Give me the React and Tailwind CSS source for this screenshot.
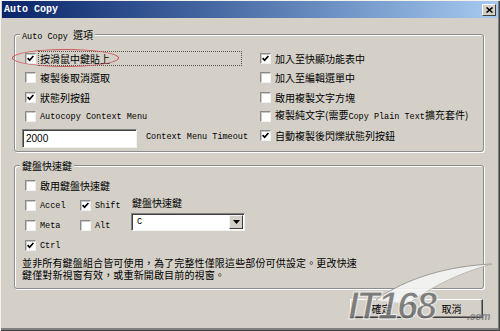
import React from "react";

const CJK = "font-['Noto_Sans_CJK_TC','Noto_Sans_CJK_SC',sans-serif]";

function M({ children }) {
  return <span className="font-['Liberation_Mono',monospace] text-[8.5px]">{children}</span>;
}

function Box({ checked }) {
  return (
    <span className="w-[11px] h-[11px] shrink-0 bg-white border border-t-[#8a8a8a] border-l-[#8a8a8a] border-b-[#f0f0f0] border-r-[#f0f0f0] shadow-[inset_1px_1px_0_#c8c8c8] flex items-center justify-center">
      {checked && (
        <svg width="7" height="7" viewBox="0 0 7 7">
          <path d="M0.6 3.2 L2.6 5.3 L6.4 1" stroke="#000" strokeWidth="1.7" fill="none" />
        </svg>
      )}
    </span>
  );
}

function Row({ checked, children, h = "h-[19.25px]", pl = "pl-[3px]" }) {
  return (
    <div className={`flex items-center gap-[4px] ${h} ${pl}`}>
      <Box checked={checked} />
      <span className="leading-[11px] whitespace-nowrap">{children}</span>
    </div>
  );
}

function Legend({ children }) {
  return (
    <span className="block w-fit -mt-[6px] -ml-[2px] px-[2px] bg-[#d4d0c8] leading-[11px] whitespace-nowrap">
      {children}
    </span>
  );
}

function Btn({ children }) {
  return (
    <div className="w-[63px] h-[19px] bg-[#d4d0c8] border border-t-white border-l-white border-b-[#404040] border-r-[#404040] shadow-[inset_-1px_-1px_0_#808080] flex items-center justify-center leading-[11px]">
      {children}
    </div>
  );
}

export default function App() {
  return (
    <div
      className={`relative w-[500px] h-[331px] bg-[#d4d0c8] overflow-hidden flex flex-col pt-[1px] px-[2px] shadow-[inset_1px_1px_0_#f4f3ee,inset_-1px_-1px_0_#404040,inset_-2px_-3px_0_#808080] ${CJK} text-[10px] text-black`}
    >
      {/* Title bar */}
      <div className="h-[17px] shrink-0 bg-linear-to-r from-[#0a246a] to-[#a6caf0] flex items-center justify-between pl-[2px] pr-[2px]">
        <span className="font-['Liberation_Mono',monospace] font-bold text-[10px] text-white leading-[12px]">
          Auto Copy
        </span>
        <div className="w-[14px] h-[12px] bg-[#d4d0c8] border border-t-white border-l-white border-b-[#404040] border-r-[#404040] flex items-center justify-center">
          <svg width="7" height="6" viewBox="0 0 7 6">
            <path d="M0.5 0.5 L6.5 5.5 M6.5 0.5 L0.5 5.5" stroke="#000" strokeWidth="1.6" />
          </svg>
        </div>
      </div>

      <div className="flex flex-col pl-[12px] pr-[14px] pt-[16px]">
        {/* Group 1 */}
        <div className="h-[118px] border border-[#8c8c8c] rounded-[3px] shadow-[inset_1px_1px_0_#fff,1px_1px_0_#fff] pl-[7px] pr-[6px]">
          <Legend>
            <M>Auto Copy </M>選項
          </Legend>
          <div className="mt-[6px] grid grid-cols-[237px_1fr]">
            <div className="flex flex-col">
              <div className="relative flex items-center gap-[4px] h-[19.25px] pl-[3px]">
                <span className="absolute left-[-10px] top-[0px] w-[107px] h-[18px] rounded-[50%] border border-[#d05050]" />
                <Box checked />
                <span className="-ml-[2px] pl-[1px] h-[15px] w-[204px] border border-dotted border-[#555] flex items-center leading-[11px] whitespace-nowrap">
                  按滑鼠中鍵貼上
                </span>
              </div>
              <Row>複製後取消選取</Row>
              <Row checked>狀態列按鈕</Row>
              <Row>
                <M>Autocopy Context Menu</M>
              </Row>
              <div className="mt-[3px] flex items-start">
                <div className="w-[115px] h-[19px] bg-white border border-t-[#808080] border-l-[#808080] border-b-[#f4f4f4] border-r-[#f4f4f4] shadow-[inset_1px_1px_0_#404040] flex items-center pl-[3px] font-['Liberation_Sans',sans-serif] text-[10px]">
                  2000
                </div>
                <span className="ml-[9px] mt-[0px] leading-[11px] whitespace-nowrap">
                  <M>Context Menu Timeout</M>
                </span>
              </div>
            </div>
            <div className="flex flex-col">
              <Row checked pl="pl-[1px]">加入至快顯功能表中</Row>
              <Row pl="pl-[1px]">加入至編輯選單中</Row>
              <Row pl="pl-[1px]">啟用複製文字方塊</Row>
              <Row pl="pl-[1px]">
                複製純文字(需要<M>Copy Plain Text</M>擴充套件)
              </Row>
              <Row checked pl="pl-[1px]">自動複製後閃爍狀態列按鈕</Row>
            </div>
          </div>
        </div>

        {/* Group 2 */}
        <div className="mt-[13px] h-[124px] border border-[#8c8c8c] rounded-[3px] shadow-[inset_1px_1px_0_#fff,1px_1px_0_#fff] pl-[7px] pr-[6px]">
          <Legend>鍵盤快速鍵</Legend>
          <div className="mt-[4px] flex flex-col">
            <Row h="h-[20px]">啟用鍵盤快速鍵</Row>
            <div className="flex">
              <div className="w-[109px] grid grid-cols-[58px_1fr]">
                <Row h="h-[20px]">
                  <M>Accel</M>
                </Row>
                <Row checked h="h-[20px]" pl="pl-0">
                  <M>Shift</M>
                </Row>
                <Row h="h-[20px]">
                  <M>Meta</M>
                </Row>
                <Row h="h-[20px]" pl="pl-0">
                  <M>Alt</M>
                </Row>
              </div>
              <div className="flex flex-col pt-[2px]">
                <span className="ml-[1px] leading-[11px]">鍵盤快速鍵</span>
                <div className="mt-[5px] w-[114px] h-[18px] bg-white border border-t-[#808080] border-l-[#808080] border-b-[#f4f4f4] border-r-[#f4f4f4] shadow-[inset_1px_1px_0_#404040] flex items-center justify-between pl-[5px] pr-[1px]">
                  <M>C</M>
                  <div className="w-[14px] h-[14px] bg-[#d4d0c8] border border-t-[#f4f4f4] border-l-[#f4f4f4] border-b-[#404040] border-r-[#404040] flex items-center justify-center">
                    <svg width="7" height="4" viewBox="0 0 7 4">
                      <path d="M0 0 H7 L3.5 4 Z" fill="#000" />
                    </svg>
                  </div>
                </div>
              </div>
            </div>
            <Row checked h="h-[20px]">
              <M>Ctrl</M>
            </Row>
            <p className="mt-[2px] leading-[11.5px] tracking-[0.15px] whitespace-nowrap">
              並非所有鍵盤組合皆可使用，為了完整性僅限這些部份可供設定。更改快速
              <br />
              鍵僅對新視窗有效，或重新開啟目前的視窗。
            </p>
          </div>
        </div>

        {/* Buttons */}
        <div className="mt-[10px] flex justify-end gap-[7px] pr-[1px]">
          <Btn>確定</Btn>
          <Btn>取消</Btn>
        </div>
      </div>

      {/* Watermark overlay */}
      <div className="absolute left-[340px] top-[256px] w-[160px] h-[75px] pointer-events-none">
        <svg className="absolute left-0 top-0" width="160" height="75" viewBox="0 0 160 75">
          <path d="M36 44 C66 22 108 10 152 8 C116 18 90 32 68 48 Z" fill="#f4f4f4" opacity="0.9" />
          <path d="M36 44 C66 22 108 10 152 8" stroke="#8a8a8a" strokeWidth="1" fill="none" opacity="0.8" />
          <path d="M68 48 C90 32 116 18 152 8" stroke="#b0b0b0" strokeWidth="1" fill="none" opacity="0.8" />
        </svg>
        <span className="absolute left-[8px] top-[30px] font-['Liberation_Sans',sans-serif] italic font-black text-[38px] leading-[40px] tracking-[-2px] text-[#6f6f6f] opacity-85 [-webkit-text-stroke:1px_#f4f4f4]">
          IT168
        </span>
        <span className="absolute left-[127px] top-[55px] font-['Liberation_Sans',sans-serif] italic font-bold text-[10px] leading-[12px] text-[#7a7a7a] opacity-85">
          .com
        </span>
      </div>
    </div>
  );
}
